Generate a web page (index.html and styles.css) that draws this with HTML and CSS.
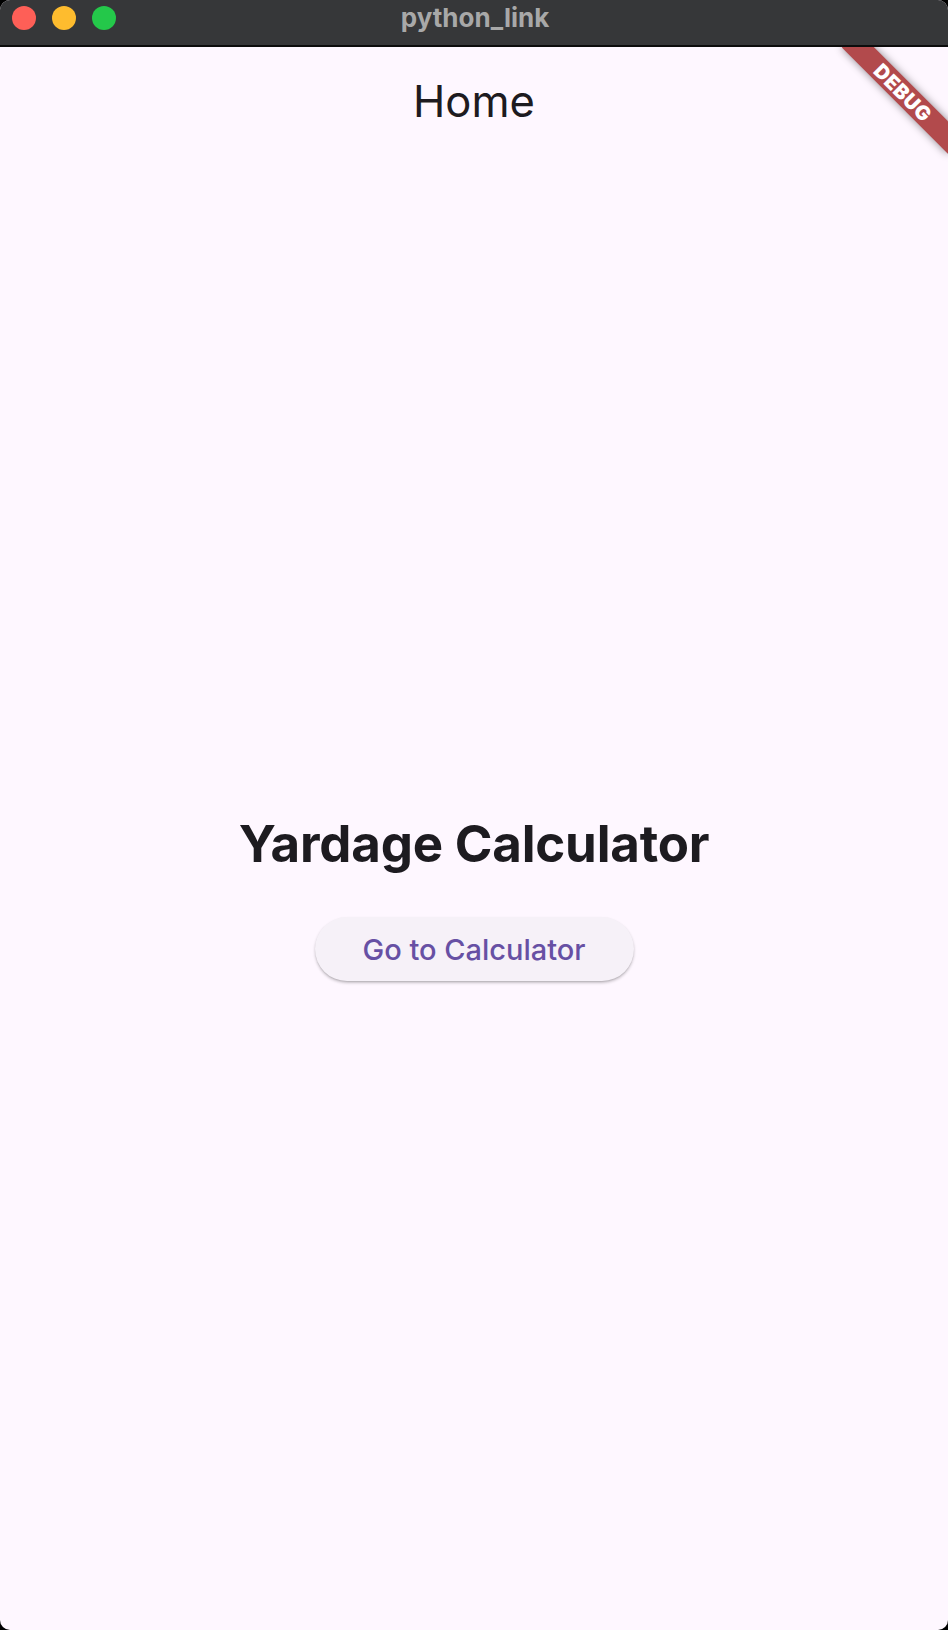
FILE: index.html
```
<!DOCTYPE html>
<html lang="en">
<head>
<meta charset="utf-8">
<title>python_link</title>
<link rel="stylesheet" href="styles.css">
</head>
<body>
<div class="window">
  <header class="titlebar">
    <div class="lights">
      <span class="light red"></span>
      <span class="light yellow"></span>
      <span class="light green"></span>
    </div>
    <div class="wintitle">python_link</div>
  </header>
  <div class="content">
    <div class="appbar"><h1 class="apptitle">Home</h1></div>
    <main class="main">
      <h2 class="heading">Yardage Calculator</h2>
      <button class="btn" type="button">Go to Calculator</button>
    </main>
    <div class="banner"><span>DEBUG</span></div>
  </div>
</div>
</body>
</html>
```
FILE: styles.css
```
* { box-sizing: border-box; }
html, body { margin: 0; padding: 0; }
body {
  background: #000;
  width: 948px;
  height: 1630px;
  overflow: hidden;
  font-family: "Inter", "Noto Sans", sans-serif;
}
.window {
  width: 948px;
  height: 1630px;
  display: flex;
  flex-direction: column;
  border-radius: 10px;
  overflow: hidden;
  background: #fef7ff;
}
.titlebar {
  height: 47px;
  flex: 0 0 47px;
  background: #363739;
  border-bottom: 2px solid #0c0c0c;
  display: flex;
  align-items: center;
  position: relative;
}
.lights {
  display: flex;
  gap: 16px;
  padding-left: 12px;
  margin-top: -10px;
}
.light {
  width: 24px;
  height: 24px;
  border-radius: 50%;
  display: block;
}
.red { background: #fe5f57; }
.yellow { background: #febc2e; }
.green { background: #24c84a; }
.wintitle {
  position: absolute;
  left: 0;
  right: 0;
  top: 0;
  height: 36px;
  line-height: 36px;
  text-align: center;
  color: #a8a8a8;
  font-weight: 700;
  font-size: 26px;
  padding-left: 2px;
}
.content {
  flex: 1;
  position: relative;
  overflow: hidden;
  display: flex;
  flex-direction: column;
}
.appbar {
  height: 105px;
  flex: 0 0 105px;
  display: flex;
  align-items: center;
  justify-content: center;
}
.apptitle {
  margin: 0;
  font-weight: 400;
  font-size: 43.5px;
  color: #1d1b20;
  line-height: 1;
  padding-top: 4px;
}
.main {
  flex: 1;
  display: flex;
  flex-direction: column;
  align-items: center;
  justify-content: center;
  padding-top: 12px;
}
.heading {
  margin: 0;
  font-size: 51px;
  line-height: 1.2;
  font-weight: 700;
  color: #1d1b20;
  letter-spacing: -0.2px;
}
.btn {
  margin-top: 43px;
  width: 319px;
  height: 64px;
  border: none;
  border-radius: 32px;
  background: #f6f1f8;
  color: #6750a4;
  font-family: "Inter", "Noto Sans", sans-serif;
  font-size: 29px;
  font-weight: 500;
  box-shadow: 0 2px 3px rgba(0, 0, 0, 0.22), 0 1px 1px rgba(0, 0, 0, 0.08);
  padding: 0;
}
.banner {
  position: absolute;
  top: 34px;
  right: -30px;
  width: 150px;
  height: 23px;
  transform: rotate(45deg);
  background: #b24a4c;
  box-shadow: 0 0 8px rgba(0, 0, 0, 0.45);
  display: flex;
  align-items: center;
  justify-content: center;
}
.banner span {
  color: #fff;
  font-family: "Inter", "DejaVu Sans", sans-serif;
  font-weight: 900;
  font-size: 20px;
  line-height: 1;
  letter-spacing: 0.5px;
}
```
